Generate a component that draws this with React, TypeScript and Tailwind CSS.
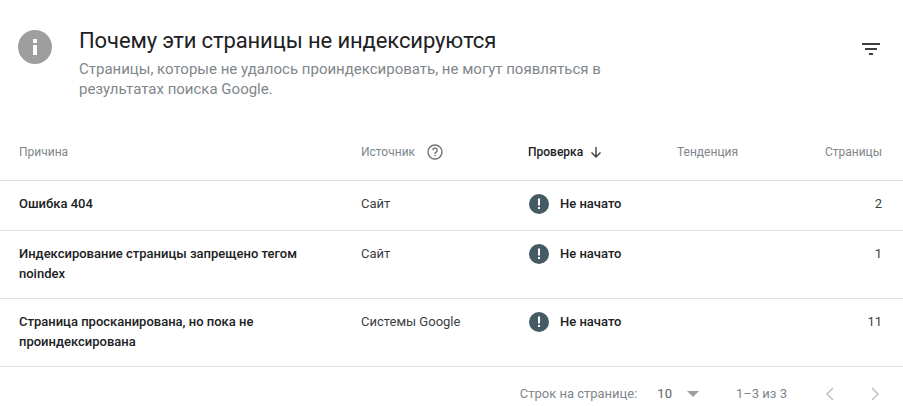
const rows = [
  { reason: "Ошибка 404", source: "Сайт", count: "2", h: "h-[50px]" },
  { reason: "Индексирование страницы запрещено тегом noindex", source: "Сайт", count: "1", h: "h-[68px]" },
  { reason: "Страница просканирована, но пока не проиндексирована", source: "Системы Google", count: "11", h: "h-[68px]" },
];

function StatusIcon() {
  return (
    <svg width="20" height="20" viewBox="0 0 20 20" className="shrink-0">
      <circle cx="10" cy="10" r="10" fill="#455a64" />
      <rect x="9" y="4.5" width="2" height="7" fill="#fff" />
      <rect x="9" y="13" width="2" height="2" fill="#fff" />
    </svg>
  );
}

export default function App() {
  return (
    <div className="w-[903px] h-[406px] bg-white rounded-lg overflow-hidden font-['Roboto',sans-serif] text-[#202124]">
      {/* header */}
      <div className="flex h-[122px] pl-[18px] pr-[22px] pt-[27px]">
        <svg width="34" height="34" viewBox="0 0 34 34" className="shrink-0 mt-[3px]">
          <circle cx="17" cy="17" r="17" fill="#9e9e9e" />
          <rect x="15" y="15" width="4" height="10" fill="#fff" />
          <rect x="15" y="9" width="4" height="4" fill="#fff" />
        </svg>
        <div className="ml-[27px] w-[560px]">
          <h2 className="text-[22px] leading-[28px] font-normal tracking-[-0.11px]">Почему эти страницы не индексируются</h2>
          <p className="mt-[4px] text-[15px] leading-[20px] text-[#80868b]">
            Страницы, которые не удалось проиндексировать, не могут появляться в результатах поиска Google.
          </p>
        </div>
        <svg width="18" height="12" viewBox="0 0 18 12" className="ml-auto mt-[16px] mr-[1px] shrink-0">
          <rect x="0" y="0" width="18" height="2" fill="#3c4043" />
          <rect x="3" y="5" width="12" height="2" fill="#3c4043" />
          <rect x="7" y="10" width="4" height="2" fill="#3c4043" />
        </svg>
      </div>

      {/* table head */}
      <div className="flex items-center h-[59px] pt-[1px] pl-[19px] pr-[21px] text-[12px] text-[#80868b] border-b border-[#e0e0e0]">
        <div className="w-[342px]">Причина</div>
        <div className="w-[167px] flex items-center gap-[11px]">
          Источник
          <svg width="18" height="18" viewBox="0 0 18 18" fill="none">
            <circle cx="9" cy="9" r="7" stroke="#6f7377" strokeWidth="1.4" />
            <path d="M6.8 7.2a2.2 2.2 0 1 1 3.4 1.9c-.8.5-1.2.9-1.2 1.8" stroke="#6f7377" strokeWidth="1.4" />
            <rect x="8.3" y="11.8" width="1.4" height="1.4" fill="#6f7377" />
          </svg>
        </div>
        <div className="w-[149px] flex items-center gap-[6px] font-medium text-[#202124]">
          Проверка
          <svg width="14" height="14" viewBox="0 0 14 14" fill="none">
            <path d="M7 2v10M2.5 7.5 7 12l4.500-4.500" stroke="#3c4043" strokeWidth="1.4" />
          </svg>
        </div>
        <div className="flex-1">Тенденция</div>
        <div>Страницы</div>
      </div>

      {/* rows */}
      {rows.map((r) => (
        <div key={r.reason} className={`flex items-start ${r.h} pt-[13px] pl-[19px] pr-[21px] text-[13px] leading-[20px] border-b border-[#e0e0e0]`}>
          <div className="w-[342px] pr-[40px] font-medium">{r.reason}</div>
          <div className="w-[168px] text-[#3c4043]">{r.source}</div>
          <div className="flex items-center gap-[11px] font-medium">
            <StatusIcon />
            Не начато
          </div>
          <div className="ml-auto text-[#3c4043]">{r.count}</div>
        </div>
      ))}

      {/* pagination */}
      <div className="flex items-center justify-end h-[39px] pt-[15px] pr-[23px] text-[13px] text-[#80868b]">
        <span>Строк на странице:</span>
        <span className="ml-[20px] text-[#5f6368]">10</span>
        <svg width="12" height="6" viewBox="0 0 12 6" className="ml-[15px]">
          <path d="M0 0h12L6 6z" fill="#9e9e9e" />
        </svg>
        <span className="ml-[37px]">1–3 из 3</span>
        <svg width="10" height="14" viewBox="0 0 10 14" fill="none" className="ml-[38px]">
          <path d="M8 1 2 7l6 6" stroke="#bdc1c6" strokeWidth="1.5" />
        </svg>
        <svg width="10" height="14" viewBox="0 0 10 14" fill="none" className="ml-[35px]">
          <path d="m2 1 6 6-6 6" stroke="#bdc1c6" strokeWidth="1.5" />
        </svg>
      </div>
    </div>
  );
}
